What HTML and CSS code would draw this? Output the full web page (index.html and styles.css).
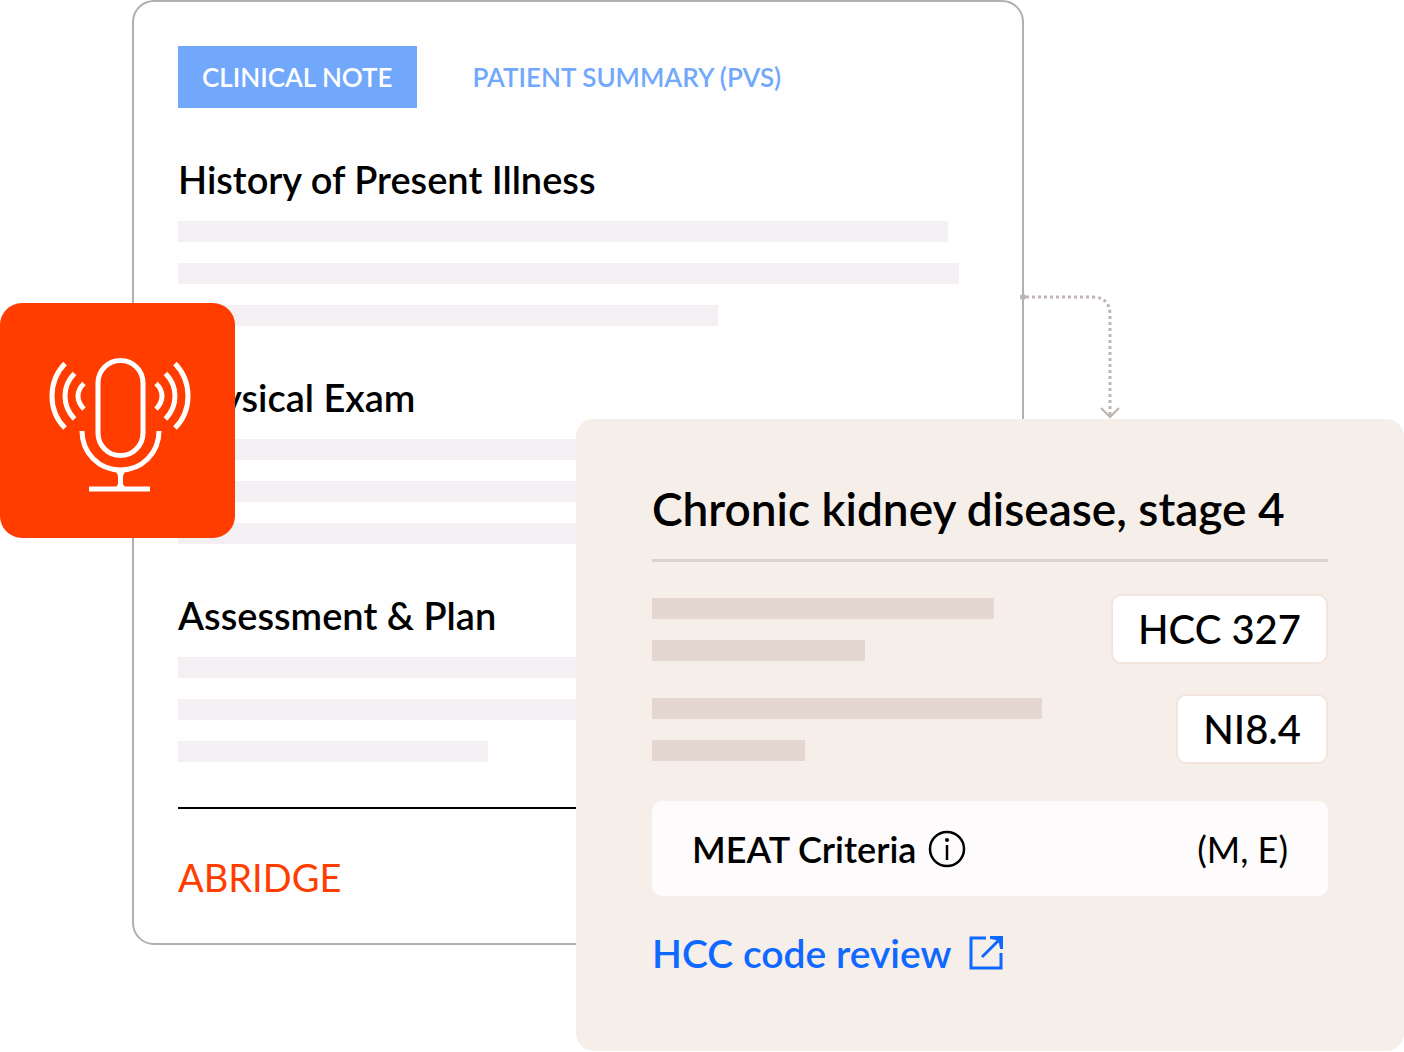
FILE: index.html
```html
<!DOCTYPE html>
<html lang="en">
<head>
<meta charset="utf-8">
<meta name="viewport" content="width=device-width, initial-scale=1">
<title>Clinical note</title>
<link rel="stylesheet" href="styles.css">
</head>
<body>
<main class="scene">
  <article class="note">
    <div class="tabs" role="tablist">
      <button class="tab tab-active" type="button" role="tab" aria-selected="true">CLINICAL NOTE</button>
      <button class="tab" type="button" role="tab" aria-selected="false">PATIENT SUMMARY (PVS)</button>
    </div>
    <section class="section">
      <h2 class="heading">History of Present Illness</h2>
      <div class="lines">
        <span class="line line-long"></span>
        <span class="line line-full"></span>
        <span class="line line-medium"></span>
      </div>
    </section>
    <section class="section">
      <h2 class="heading">Physical Exam</h2>
      <div class="lines">
        <span class="line line-long"></span>
        <span class="line line-full"></span>
        <span class="line line-medium"></span>
      </div>
    </section>
    <section class="section">
      <h2 class="heading">Assessment &amp; Plan</h2>
      <div class="lines">
        <span class="line line-long"></span>
        <span class="line line-full"></span>
        <span class="line line-short"></span>
      </div>
    </section>
    <footer class="note-footer">ABRIDGE</footer>
  </article>

  <svg class="connector" width="110" height="130" viewBox="0 0 110 130" fill="none" aria-hidden="true">
    <circle cx="5" cy="6" r="3" fill="#bab4b3"/>
    <path d="M8 6H74Q92 6 92 24V124" stroke="#c0b5b0" stroke-width="3" stroke-dasharray="3 3"/>
    <path d="M83 117L92 126L101 117" stroke="#bab4b1" stroke-width="2"/>
  </svg>

  <div class="badge">
    <svg class="mic" viewBox="0 0 235 235" fill="none" stroke="#fff" stroke-width="5" role="img" aria-label="Recording">
      <rect x="98" y="57.500" width="45" height="95" rx="22.500"/>
      <path d="M82 128C82 150 99 167 120.500 167S159 150 159 128"/>
      <path d="M89 186H150"/>
      <path d="M112 167Q118 169 118 174V180Q118 184 113 185H128Q123 184 123 180V174Q123 169 129 167Z" fill="#fff" stroke="none"/>
      <path d="M65 60.500Q52 74 52 93T65 125M74.500 70.500Q65 80 65 93T74.500 116M84 80.500Q78 86 78 93T84 106"/>
      <path d="M175 60.500Q188 74 188 93T175 125M165.500 70.500Q175 80 175 93T165.500 116M156 80.500Q162 86 162 93T156 106"/>
    </svg>
  </div>

  <article class="review">
    <h1 class="title">Chronic kidney disease, stage 4</h1>
    <div class="codes">
      <div class="code-row">
        <div class="lines">
          <span class="line line-a"></span>
          <span class="line line-b"></span>
        </div>
        <span class="chip">HCC 327</span>
      </div>
      <div class="code-row">
        <div class="lines">
          <span class="line line-c"></span>
          <span class="line line-d"></span>
        </div>
        <span class="chip">NI8.4</span>
      </div>
    </div>
    <div class="criteria">
      <span class="criteria-name">MEAT Criteria</span>
      <svg width="38" height="38" viewBox="0 0 38 38" fill="none" aria-hidden="true">
        <circle cx="19" cy="19" r="17" stroke="#000" stroke-width="2.500"/>
        <circle cx="19" cy="10" r="2" fill="#000"/>
        <path d="M19 15V30" stroke="#000" stroke-width="2.500"/>
      </svg>
      <span class="criteria-value">(M, E)</span>
    </div>
    <a class="link" href="#review">HCC code review
      <svg width="34" height="34" viewBox="0 0 34 34" fill="none" stroke="#0f68ff" stroke-width="3" aria-hidden="true">
        <path d="M17 2H2V32H32V17"/>
        <path d="M13 21L29 5"/>
        <path d="M21 0H34V13H31L30 7L27 4L21 3Z" fill="#0f68ff" stroke="none"/>
      </svg>
    </a>
  </article>
</main>
</body>
</html>
```

FILE: styles.css
```css
* {
  box-sizing: border-box;
}

body {
  margin: 0;
  background: #fff;
  color: #000;
  font-family: Lato, "Liberation Sans", sans-serif;
  font-weight: 600;
}

h1, h2 {
  margin: 0;
  font-weight: inherit;
}

/* The cards share one grid row and overlap by column span. */
.scene {
  display: grid;
  grid-template-columns: 132fr 103fr 341fr 448fr 380fr;
  align-items: start;
}

.note,
.badge,
.connector,
.review {
  grid-row: 1;
}

.note {
  grid-column: 2 / 5;
  min-width: 0;
  padding: 44px;
  border: 2px solid #b1afb0;
  border-radius: 22px;
  background: #fefefe;
}

.tabs {
  display: flex;
  gap: 32px;
}

.tab {
  height: 62px;
  padding: 0 24px;
  border: 0;
  background: none;
  color: #72a8fc;
  font: inherit;
  font-size: 26px;
  white-space: nowrap;
}

.tab-active {
  background: #72a8fc;
  color: #fff;
}

.section {
  margin-top: 48px;
}

.heading {
  margin-bottom: 19px;
  font-size: 38px;
  line-height: 46px;
  white-space: nowrap;
}

.lines {
  display: flex;
  flex-direction: column;
  gap: 21px;
}

.line {
  height: 21px;
  max-width: 100%;
  background: #f3eff3;
}

.line-long { width: 770px; }
.line-full { width: 781px; }
.line-medium { width: 540px; }
.line-short { width: 310px; }

.note-footer {
  margin-top: 45px;
  padding-top: 46px;
  border-top: 2px solid #000;
  color: #ff3d00;
  font-size: 38px;
  font-weight: 400;
  line-height: 44px;
}

.connector {
  grid-column: 5;
  margin: 291px 0 0 -6px;
}

.badge {
  grid-column: 1 / 3;
  margin-top: 303px;
  border-radius: 22px;
  background: #ff3d00;
}

.mic {
  display: block;
  width: 100%;
}

.review {
  grid-column: 4 / 6;
  margin-top: 419px;
  padding: 62px 76px 74px;
  border-radius: 18px;
  background: #f6eee9;
}

.title {
  padding-bottom: 22px;
  border-bottom: 3px solid #dbd2cd;
  font-size: 46px;
  line-height: 56px;
  white-space: nowrap;
}

.codes {
  display: flex;
  flex-direction: column;
  gap: 30px;
  margin-top: 32px;
}

.code-row {
  display: flex;
  align-items: center;
  justify-content: space-between;
}

.code-row .line {
  background: #e4d7d0;
}

.line-a { width: 342px; }
.line-b { width: 213px; }
.line-c { width: 390px; }
.line-d { width: 153px; }

.chip {
  padding: 0 25px;
  border: 2px solid #f1e5de;
  border-radius: 10px;
  background: #fff;
  font-size: 40px;
  font-weight: 500;
  line-height: 66px;
  white-space: nowrap;
}

.criteria {
  display: flex;
  align-items: center;
  gap: 12px;
  height: 95px;
  margin-top: 37px;
  padding: 0 40px;
  border-radius: 10px;
  background: #fefbfc;
  font-size: 36px;
}

.criteria-value {
  margin-left: auto;
  font-weight: 400;
}

.link {
  display: inline-flex;
  align-items: center;
  gap: 18px;
  margin-top: 33px;
  color: #0f68ff;
  font-size: 39px;
  line-height: 48px;
  text-decoration: none;
}
```
